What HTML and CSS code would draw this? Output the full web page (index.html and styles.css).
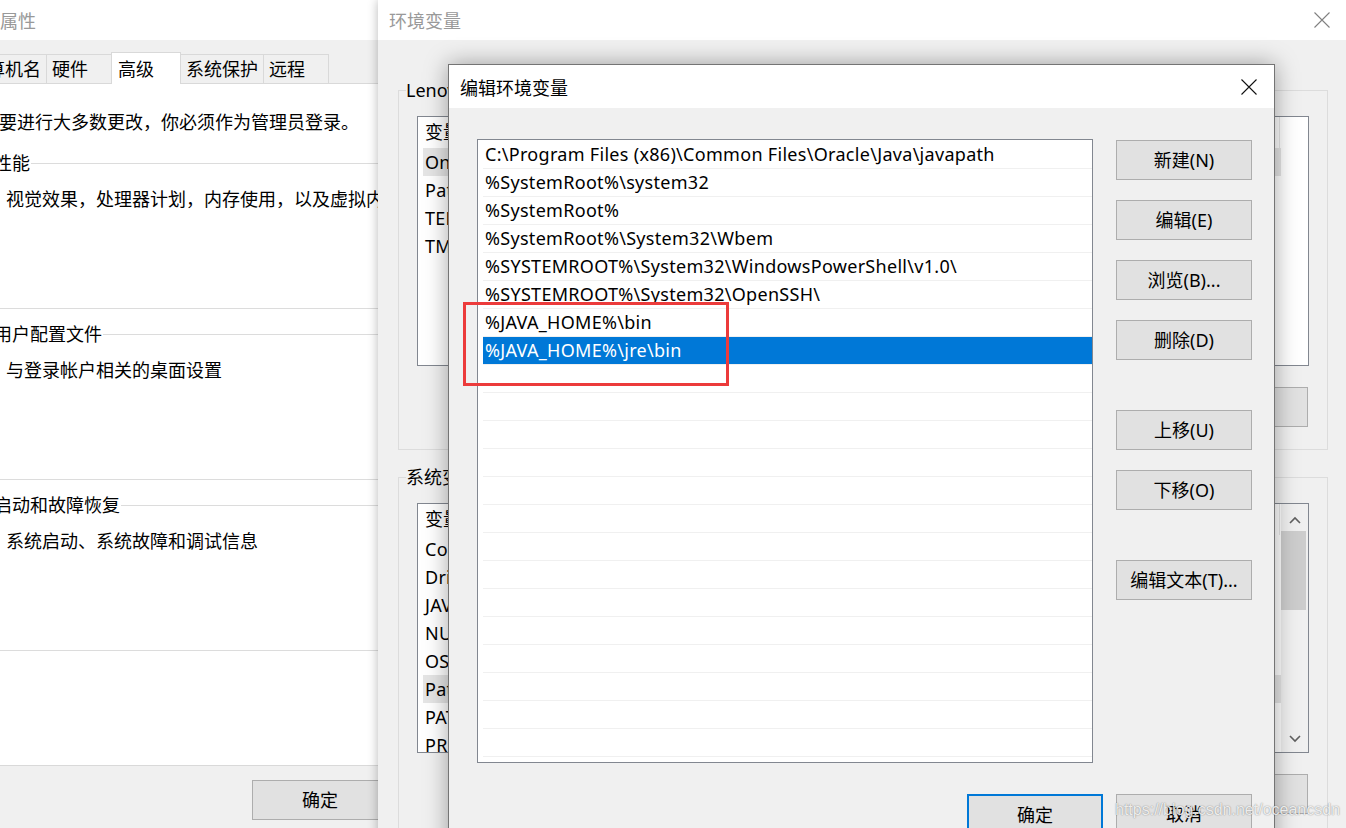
FILE: index.html
```html
<!DOCTYPE html>
<html lang="zh-CN">
<head>
    <meta charset="UTF-8">
    <title>编辑环境变量</title>
    <link rel="stylesheet" href="styles.css">
</head>
<body>

<!-- 系统属性 -->
<div class="window win-sys">
    <div class="titlebar"><span>系统属性</span></div>
    <div class="tabs">
        <div class="tab">计算机名</div>
        <div class="tab">硬件</div>
        <div class="tab active">高级</div>
        <div class="tab">系统保护</div>
        <div class="tab">远程</div>
    </div>
    <div class="tab-panel">
        <p class="intro">要进行大多数更改，你必须作为管理员登录。</p>
        <div class="group">
            <div class="group-label">性能</div>
            <p class="group-text">视觉效果，处理器计划，内存使用，以及虚拟内存</p>
        </div>
        <div class="group">
            <div class="group-label">用户配置文件</div>
            <p class="group-text">与登录帐户相关的桌面设置</p>
        </div>
        <div class="group">
            <div class="group-label">启动和故障恢复</div>
            <p class="group-text">系统启动、系统故障和调试信息</p>
        </div>
    </div>
    <div class="sys-footer">
        <button class="btn">确定</button>
        <button class="btn">取消</button>
        <button class="btn">应用(A)</button>
    </div>
</div>

<!-- 环境变量 -->
<div class="window win-env">
    <div class="titlebar">
        <span>环境变量</span>
        <svg class="close" width="16" height="16" viewBox="0 0 16 16"><path d="M0.5 0.5L15.5 15.5M15.5 0.5L0.5 15.5" stroke="#808080" stroke-width="1.1" fill="none"/></svg>
    </div>
    <div class="env-body">
        <div class="env-group">
            <div class="group-label">Lenovo 的用户变量(U)</div>
            <div class="listview">
                <div class="lv-main">
                    <div class="lv-header"><span class="col-name">变量</span><span>值</span></div>
                    <div class="lv-row hot"><span class="col-name">OneDrive</span><span>C:\Users\Lenovo\OneDrive</span></div>
                    <div class="lv-row"><span class="col-name">Path</span><span>C:\Users\Lenovo\AppData\Local\Microsoft\WindowsApps;</span></div>
                    <div class="lv-row"><span class="col-name">TEMP</span><span>%USERPROFILE%\AppData\Local\Temp</span></div>
                    <div class="lv-row"><span class="col-name">TMP</span><span>%USERPROFILE%\AppData\Local\Temp</span></div>
                </div>
            </div>
            <div class="env-buttons">
                <button class="btn">新建(N)...</button>
                <button class="btn">编辑(E)...</button>
                <button class="btn">删除(D)</button>
            </div>
        </div>
        <div class="env-group second">
            <div class="group-label">系统变量(S)</div>
            <div class="listview">
                <div class="lv-main">
                    <div class="lv-header"><span class="col-name">变量</span><span>值</span></div>
                    <div class="lv-row"><span class="col-name">ComSpec</span><span>C:\WINDOWS\system32\cmd.exe</span></div>
                    <div class="lv-row"><span class="col-name">DriverData</span><span>C:\Windows\System32\Drivers\DriverData</span></div>
                    <div class="lv-row"><span class="col-name">JAVA_HOME</span><span>C:\Program Files\Java\jdk1.8.0_201</span></div>
                    <div class="lv-row"><span class="col-name">NUMBER_OF_PROCESSORS</span><span>8</span></div>
                    <div class="lv-row"><span class="col-name">OS</span><span>Windows_NT</span></div>
                    <div class="lv-row hot"><span class="col-name">Path</span><span>C:\Program Files (x86)\Common Files\Oracle\Java\javapath</span></div>
                    <div class="lv-row"><span class="col-name">PATHEXT</span><span>.COM;.EXE;.BAT;.CMD;.VBS;.VBE;.JS;.JSE</span></div>
                    <div class="lv-row"><span class="col-name">PROCESSOR_ARCHITECTURE</span><span>AMD64</span></div>
                </div>
                <div class="lv-scroll">
                    <div class="sb-btn up"><svg width="12" height="8" viewBox="0 0 12 8"><path d="M1 7L6 2L11 7" stroke="#606060" stroke-width="1.6" fill="none"/></svg></div>
                    <div class="sb-thumb"></div>
                    <div class="sb-track"></div>
                    <div class="sb-btn down"><svg width="12" height="8" viewBox="0 0 12 8"><path d="M1 1L6 6L11 1" stroke="#606060" stroke-width="1.6" fill="none"/></svg></div>
                </div>
            </div>
            <div class="env-buttons">
                <button class="btn">新建(W)...</button>
                <button class="btn">编辑(I)...</button>
                <button class="btn">删除(L)</button>
            </div>
        </div>
    </div>
</div>

<!-- 编辑环境变量 -->
<div class="window win-edit">
    <div class="titlebar">
        <span>编辑环境变量</span>
        <svg class="close" width="16" height="16" viewBox="0 0 16 16"><path d="M0.5 0.5L15.5 15.5M15.5 0.5L0.5 15.5" stroke="#111" stroke-width="1.1" fill="none"/></svg>
    </div>
    <div class="edit-body">
        <div class="edit-main">
            <div class="path-list">
                <div class="path-row">C:\Program Files (x86)\Common Files\Oracle\Java\javapath</div>
                <div class="path-row">%SystemRoot%\system32</div>
                <div class="path-row">%SystemRoot%</div>
                <div class="path-row">%SystemRoot%\System32\Wbem</div>
                <div class="path-row">%SYSTEMROOT%\System32\WindowsPowerShell\v1.0\</div>
                <div class="path-row">%SYSTEMROOT%\System32\OpenSSH\</div>
                <div class="path-row">%JAVA_HOME%\bin</div>
                <div class="path-row selected">%JAVA_HOME%\jre\bin</div>
                <div class="path-row"></div>
                <div class="path-row"></div>
                <div class="path-row"></div>
                <div class="path-row"></div>
                <div class="path-row"></div>
                <div class="path-row"></div>
                <div class="path-row"></div>
                <div class="path-row"></div>
                <div class="path-row"></div>
                <div class="path-row"></div>
                <div class="path-row"></div>
                <div class="path-row"></div>
                <div class="path-row"></div>
                <div class="path-row"></div>
                <div class="path-row"></div>
            </div>
            <div class="side-buttons">
                <button class="btn">新建(N)</button>
                <button class="btn">编辑(E)</button>
                <button class="btn">浏览(B)...</button>
                <button class="btn">删除(D)</button>
                <button class="btn gap">上移(U)</button>
                <button class="btn">下移(O)</button>
                <button class="btn gap">编辑文本(T)...</button>
            </div>
        </div>
        <div class="edit-footer">
            <button class="btn default">确定</button>
            <button class="btn">取消</button>
        </div>
    </div>
    <!-- 标注框 -->
    <div class="mark"></div>
</div>

<div class="watermark">https://blog.csdn.net/oceancsdn</div>

</body>
</html>
```

FILE: styles.css
```css
/* 全局 */
* {
    box-sizing: border-box;
}

body {
    margin: 0;
    width: 1346px;
    height: 828px;
    overflow: hidden;
    position: relative;
    background: #f0f0f0;
    font-family: "Noto Sans", "Noto Sans CJK SC", sans-serif;
    font-size: 18px;
    color: #000;
}

p {
    margin: 0;
}

.btn {
    width: 136px;
    height: 40px;
    padding: 0;
    background: #e1e1e1;
    border: 1px solid #adadad;
    font: inherit;
    line-height: 38px;
    color: #000;
    white-space: nowrap;
}

.btn.default {
    border: 2px solid #0078d7;
}

/* 窗口 */
.window {
    position: absolute;
    background: #f0f0f0;
}

.titlebar {
    background: #fff;
    display: flex;
    justify-content: space-between;
    align-items: center;
}

.close {
    display: block;
}

/* 系统属性 */
.win-sys {
    left: -49px;
    top: 0;
    width: 760px;
    height: 828px;
}

.win-sys .titlebar {
    height: 40px;
    padding-left: 13px;
    color: #999;
}

.tabs {
    display: flex;
    align-items: flex-end;
    height: 43px;
    padding-left: 12px;
}

.tab {
    height: 29px;
    line-height: 28px;
    min-width: 66px;
    padding: 0 5px;
    margin-right: -1px;
    border: 1px solid #d9d9d9;
    border-bottom: 0;
    background: #f0f0f0;
    white-space: nowrap;
}

.tab.active {
    position: relative;
    z-index: 1;
    height: 32px;
    min-width: 70px;
    padding: 2px 6px 0;
    margin-bottom: -1px;
    background: #fff;
}

.tab-panel {
    height: 683px;
    margin: 0 12px;
    padding: 26px 0 0 20px;
    background: #fff;
    border: 1px solid #d9d9d9;
}

.intro {
    padding-left: 15px;
    line-height: 24px;
}

.group {
    height: 146px;
    margin-top: 25px;
    border: 1px solid #dcdcdc;
}

.intro + .group {
    margin-top: 29px;
}

.group-label {
    width: fit-content;
    margin: -13px 0 0 8px;
    padding: 0 1px;
    line-height: 24px;
    background: #fff;
    white-space: nowrap;
}

.group-text {
    margin-top: 12px;
    padding-left: 21px;
    line-height: 24px;
}

.sys-footer {
    display: flex;
    gap: 13px;
    padding: 14px 0 0 301px;
}

/* 环境变量 */
.win-env {
    left: 378px;
    top: 0;
    width: 970px;
    height: 900px;
    box-shadow: 0 0 10px rgba(0, 0, 0, 0.28);
}

.win-env .titlebar {
    height: 40px;
    padding: 0 18px 0 11px;
    color: #999;
}

.env-body {
    padding-left: 20px;
}

.env-group {
    width: 930px;
    height: 360px;
    margin-top: 50px;
    border: 1px solid #dcdcdc;
}

.env-group.second {
    height: 420px;
    margin-top: 27px;
}

.env-group .group-label {
    margin-left: 7px;
    padding: 0;
    background: #f0f0f0;
}

.listview {
    display: flex;
    width: 892px;
    height: 250px;
    margin: 14px 0 0 18px;
    border: 1px solid #828790;
    background: #fff;
    overflow: hidden;
}

.lv-main {
    flex: 1;
    overflow: hidden;
}

.lv-header {
    display: flex;
    width: 862px;
    height: 31px;
    line-height: 31px;
    padding-left: 7px;
    border-right: 1px solid #e5e5e5;
    white-space: nowrap;
}

.lv-row {
    display: flex;
    width: 858px;
    height: 28px;
    line-height: 28px;
    margin-left: 5px;
    padding-left: 2px;
    letter-spacing: 0.25px;
    white-space: nowrap;
    overflow: hidden;
}

.lv-row.hot {
    background: #e5e5e5;
}

.col-name {
    width: 260px;
    flex-shrink: 0;
}

.lv-scroll {
    width: 27px;
    display: flex;
    flex-direction: column;
    background: #f0f0f0;
}

.sb-btn {
    height: 27px;
    display: flex;
    justify-content: center;
    align-items: center;
}

.sb-btn.up {
    padding-top: 4px;
}

.sb-thumb {
    height: 79px;
    margin-right: 2px;
    background: #cdcdcd;
}

.sb-track {
    flex: 1;
}

.env-buttons {
    display: flex;
    justify-content: flex-end;
    gap: 13px;
    margin-top: 21px;
    padding-right: 19px;
}

/* 编辑环境变量 */
.win-edit {
    left: 448px;
    top: 64px;
    width: 827px;
    height: 820px;
    border: 1px solid #747474;
    box-shadow: 0 0 22px rgba(0, 0, 0, 0.35);
}

.win-edit .titlebar {
    height: 43px;
    padding: 0 17px 0 11px;
}

.edit-body {
    padding: 31px 22px 0 28px;
}

.edit-main {
    display: flex;
    gap: 23px;
}

.path-list {
    width: 616px;
    height: 624px;
    padding: 1px 0 0 5px;
    border: 1px solid #828790;
    background: #fff;
    overflow: hidden;
}

.path-row {
    height: 28px;
    line-height: 27px;
    padding-left: 2px;
    letter-spacing: 0.3px;
    border-bottom: 1px solid #f0f0f0;
    white-space: nowrap;
}

.path-row.selected {
    background: #0078d7;
    color: #fff;
}

.side-buttons {
    display: flex;
    flex-direction: column;
    gap: 20px;
    padding-top: 1px;
}

.side-buttons .gap {
    margin-top: 30px;
}

.edit-footer {
    display: flex;
    justify-content: flex-end;
    gap: 13px;
    margin-top: 31px;
}

.mark {
    position: absolute;
    left: 14px;
    top: 237px;
    width: 266px;
    height: 84px;
    border: 3px solid #ec3b3b;
}

/* 水印 */
.watermark {
    position: absolute;
    left: 1115px;
    top: 800px;
    font-family: "Liberation Sans", sans-serif;
    font-size: 16px;
    line-height: 20px;
    color: rgba(255, 255, 255, 0.85);
    text-shadow: 0 0 1px rgba(0, 0, 0, 0.35), 0 0 2px rgba(0, 0, 0, 0.2);
}
```
